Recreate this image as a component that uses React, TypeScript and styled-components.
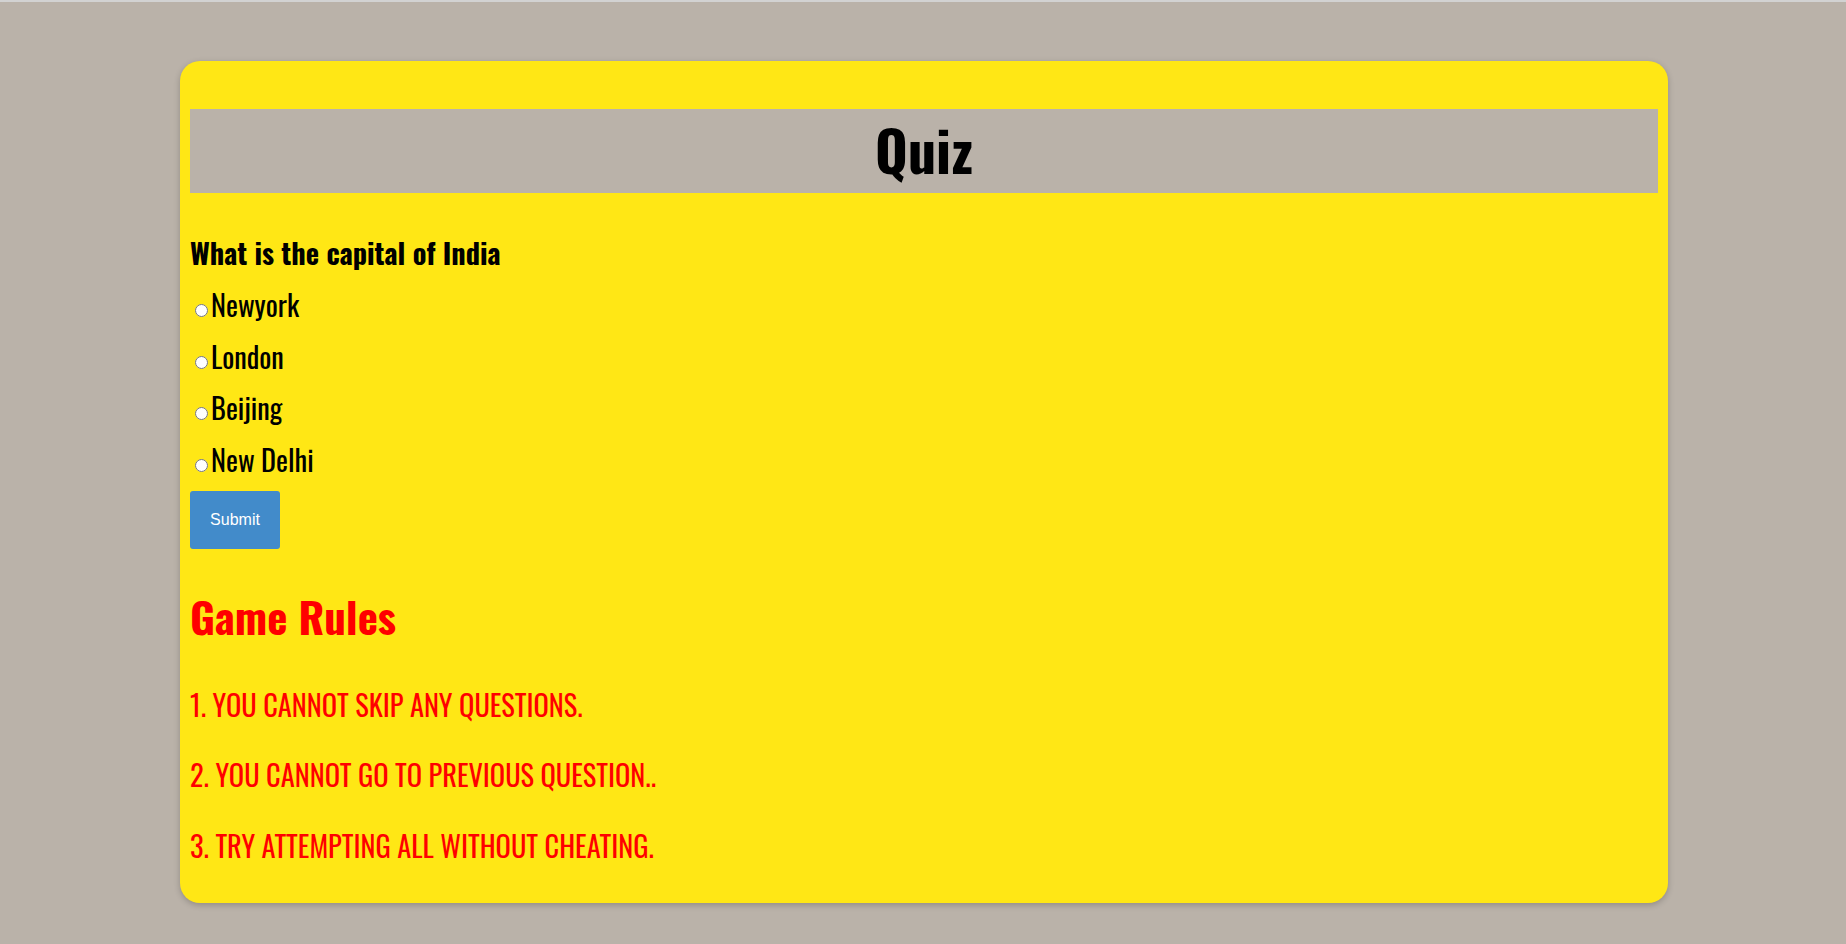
import React from "react";
import styled, { createGlobalStyle } from "styled-components";

const GlobalStyle = createGlobalStyle`
  html, body {
    margin: 0;
    padding: 0;
  }
  body {
    background: #bab2a9;
    border-top: 2px solid #d2d2d2;
    padding-left: 2px;
    min-height: 100vh;
    box-sizing: border-box;
    font-family: "Oswald", "Open Sans", sans-serif;
  }
`;

const Card = styled.div`
  width: 1488px;
  box-sizing: border-box;
  margin: 59px auto 0;
  padding: 48px 10px 22.5px;
  background: #ffe715;
  border-radius: 20px;
  box-shadow: 0 2px 6px rgba(0, 0, 0, 0.22);
`;

const Header = styled.h1`
  margin: 0;
  height: 84px;
  background: #bab2a9;
  text-align: center;
  font-size: 56px;
  line-height: 80px;
  font-weight: 700;
  color: #000;
`;

const Question = styled.h3`
  margin: 37px 0 0;
  font-size: 28.4px;
  line-height: 44px;
  font-weight: 700;
  color: #000;
`;

const Options = styled.div`
  margin-top: 5px;
  display: flex;
  flex-direction: column;
`;

const Option = styled.label`
  display: block;
  font-size: 28.4px;
  line-height: 51.7px;
  font-weight: 400;
  color: #000;
`;

const Radio = styled.input`
  width: 13px;
  height: 13px;
  margin: 3px 3px 0 5px;
`;

const SubmitButton = styled.button`
  display: block;
  margin-top: 5px;
  width: 90px;
  height: 58px;
  border: none;
  border-radius: 3px;
  background: #428bca;
  color: #fff;
  font-family: "Liberation Sans", Arial, sans-serif;
  font-size: 16px;
  cursor: pointer;
`;

const RulesTitle = styled.h2`
  margin: 37px 0 0;
  font-size: 43px;
  line-height: 60px;
  font-weight: 700;
  color: #ff0000;
`;

const RulesList = styled.div`
  margin-top: 23px;
`;

const Rule = styled.p`
  margin: 0;
  font-size: 28.4px;
  line-height: 70.5px;
  font-weight: 400;
  color: #ff0000;
`;

const options = ["Newyork", "London", "Beijing", "New Delhi"];
const rules = [
  "1. YOU CANNOT SKIP ANY QUESTIONS.",
  "2. YOU CANNOT GO TO PREVIOUS QUESTION..",
  "3. TRY ATTEMPTING ALL WITHOUT CHEATING.",
];

export default function App() {
  return (
    <>
      <GlobalStyle />
      <Card>
        <Header>Quiz</Header>
        <Question>What is the capital of India</Question>
        <Options>
          {options.map((o) => (
            <Option key={o}>
              <Radio type="radio" name="answer" value={o} />
              {o}
            </Option>
          ))}
        </Options>
        <SubmitButton type="button">Submit</SubmitButton>
        <RulesTitle>Game Rules</RulesTitle>
        <RulesList>
          {rules.map((r) => (
            <Rule key={r}>{r}</Rule>
          ))}
        </RulesList>
      </Card>
    </>
  );
}
